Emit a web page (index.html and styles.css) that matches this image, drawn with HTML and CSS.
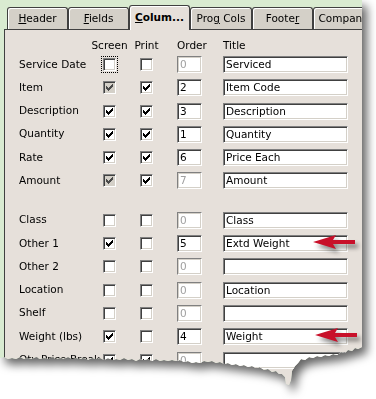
FILE: index.html
```html
<!DOCTYPE html>
<html lang="en">
<head>
  <meta charset="UTF-8" />
  <meta name="viewport" content="width=device-width, initial-scale=1.0"/>
  <title>Columns</title>
  <link rel="stylesheet" href="styles.css">
</head>
<body>
  <div class="shot">
    <div class="drop">
      <div class="window">
        <div class="tabs">
          <div class="tab"><u>H</u>eader</div>
          <div class="tab"><u>F</u>ields</div>
          <div class="tab active"><u>C</u>olum...</div>
          <div class="tab wide">Pro<u>g</u> Cols</div>
          <div class="tab">Foote<u>r</u></div>
          <div class="tab">Company</div>
        </div>

        <div class="panel">
          <div class="row head">
            <span></span>
            <span class="ctr">Screen</span>
            <span class="ctr">Print</span>
            <span>Order</span>
            <span>Title</span>
          </div>

          <div class="row">
            <span class="lbl">Service Date</span>
            <span class="cb focus"></span>
            <span class="cb"></span>
            <span class="edit num off">0</span>
            <span class="edit title">Serviced</span>
          </div>
          <div class="row">
            <span class="lbl">Item</span>
            <span class="cb dim"><svg viewBox="0 0 7 7"><path d="M0 2h1v3h-1z M1 3h1v3h-1z M2 4h1v3h-1z M3 3h1v3h-1z M4 2h1v3h-1z M5 1h1v3h-1z M6 0h1v3h-1z"/></svg></span>
            <span class="cb"><svg viewBox="0 0 7 7"><path d="M0 2h1v3h-1z M1 3h1v3h-1z M2 4h1v3h-1z M3 3h1v3h-1z M4 2h1v3h-1z M5 1h1v3h-1z M6 0h1v3h-1z"/></svg></span>
            <span class="edit num">2</span>
            <span class="edit title">Item Code</span>
          </div>
          <div class="row">
            <span class="lbl">Description</span>
            <span class="cb"><svg viewBox="0 0 7 7"><path d="M0 2h1v3h-1z M1 3h1v3h-1z M2 4h1v3h-1z M3 3h1v3h-1z M4 2h1v3h-1z M5 1h1v3h-1z M6 0h1v3h-1z"/></svg></span>
            <span class="cb"><svg viewBox="0 0 7 7"><path d="M0 2h1v3h-1z M1 3h1v3h-1z M2 4h1v3h-1z M3 3h1v3h-1z M4 2h1v3h-1z M5 1h1v3h-1z M6 0h1v3h-1z"/></svg></span>
            <span class="edit num">3</span>
            <span class="edit title">Description</span>
          </div>
          <div class="row">
            <span class="lbl">Quantity</span>
            <span class="cb"><svg viewBox="0 0 7 7"><path d="M0 2h1v3h-1z M1 3h1v3h-1z M2 4h1v3h-1z M3 3h1v3h-1z M4 2h1v3h-1z M5 1h1v3h-1z M6 0h1v3h-1z"/></svg></span>
            <span class="cb"><svg viewBox="0 0 7 7"><path d="M0 2h1v3h-1z M1 3h1v3h-1z M2 4h1v3h-1z M3 3h1v3h-1z M4 2h1v3h-1z M5 1h1v3h-1z M6 0h1v3h-1z"/></svg></span>
            <span class="edit num">1</span>
            <span class="edit title">Quantity</span>
          </div>
          <div class="row">
            <span class="lbl">Rate</span>
            <span class="cb"><svg viewBox="0 0 7 7"><path d="M0 2h1v3h-1z M1 3h1v3h-1z M2 4h1v3h-1z M3 3h1v3h-1z M4 2h1v3h-1z M5 1h1v3h-1z M6 0h1v3h-1z"/></svg></span>
            <span class="cb"><svg viewBox="0 0 7 7"><path d="M0 2h1v3h-1z M1 3h1v3h-1z M2 4h1v3h-1z M3 3h1v3h-1z M4 2h1v3h-1z M5 1h1v3h-1z M6 0h1v3h-1z"/></svg></span>
            <span class="edit num">6</span>
            <span class="edit title">Price Each</span>
          </div>
          <div class="row">
            <span class="lbl">Amount</span>
            <span class="cb dim"><svg viewBox="0 0 7 7"><path d="M0 2h1v3h-1z M1 3h1v3h-1z M2 4h1v3h-1z M3 3h1v3h-1z M4 2h1v3h-1z M5 1h1v3h-1z M6 0h1v3h-1z"/></svg></span>
            <span class="cb"><svg viewBox="0 0 7 7"><path d="M0 2h1v3h-1z M1 3h1v3h-1z M2 4h1v3h-1z M3 3h1v3h-1z M4 2h1v3h-1z M5 1h1v3h-1z M6 0h1v3h-1z"/></svg></span>
            <span class="edit num off">7</span>
            <span class="edit title">Amount</span>
          </div>

          <div class="gap"></div>

          <div class="row">
            <span class="lbl">Class</span>
            <span class="cb"></span>
            <span class="cb"></span>
            <span class="edit num off">0</span>
            <span class="edit title">Class</span>
          </div>
          <div class="row">
            <span class="lbl">Other 1</span>
            <span class="cb"><svg viewBox="0 0 7 7"><path d="M0 2h1v3h-1z M1 3h1v3h-1z M2 4h1v3h-1z M3 3h1v3h-1z M4 2h1v3h-1z M5 1h1v3h-1z M6 0h1v3h-1z"/></svg></span>
            <span class="cb"></span>
            <span class="edit num">5</span>
            <span class="edit title">Extd Weight</span>
          </div>
          <div class="row">
            <span class="lbl">Other 2</span>
            <span class="cb"></span>
            <span class="cb"></span>
            <span class="edit num off">0</span>
            <span class="edit title"></span>
          </div>
          <div class="row">
            <span class="lbl">Location</span>
            <span class="cb"></span>
            <span class="cb"></span>
            <span class="edit num off">0</span>
            <span class="edit title">Location</span>
          </div>
          <div class="row">
            <span class="lbl">Shelf</span>
            <span class="cb"></span>
            <span class="cb"></span>
            <span class="edit num off">0</span>
            <span class="edit title"></span>
          </div>
          <div class="row">
            <span class="lbl">Weight (lbs)</span>
            <span class="cb"><svg viewBox="0 0 7 7"><path d="M0 2h1v3h-1z M1 3h1v3h-1z M2 4h1v3h-1z M3 3h1v3h-1z M4 2h1v3h-1z M5 1h1v3h-1z M6 0h1v3h-1z"/></svg></span>
            <span class="cb"></span>
            <span class="edit num">4</span>
            <span class="edit title">Weight</span>
          </div>
          <div class="row">
            <span class="lbl">Qty Price Break</span>
            <span class="cb"><svg viewBox="0 0 7 7"><path d="M0 2h1v3h-1z M1 3h1v3h-1z M2 4h1v3h-1z M3 3h1v3h-1z M4 2h1v3h-1z M5 1h1v3h-1z M6 0h1v3h-1z"/></svg></span>
            <span class="cb"><svg viewBox="0 0 7 7"><path d="M0 2h1v3h-1z M1 3h1v3h-1z M2 4h1v3h-1z M3 3h1v3h-1z M4 2h1v3h-1z M5 1h1v3h-1z M6 0h1v3h-1z"/></svg></span>
            <span class="edit num off">0</span>
            <span class="edit title"></span>
          </div>
        </div>

        <!-- callout arrows -->
        <svg class="arrow a1" viewBox="0 0 42 14"><path d="M0 7 L23 0 L20 5 L42 5 L42 9 L20 9 L23 14 Z"/></svg>
        <svg class="arrow a2" viewBox="0 0 42 14"><path d="M0 7 L23 0 L20 5 L42 5 L42 9 L20 9 L23 14 Z"/></svg>
      </div>
    </div>
  </div>
</body>
</html>
```

FILE: styles.css
```css
body {
  margin: 0;
  background: #fff;
  font-family: "DejaVu Sans", sans-serif;
  font-size: 10.5px;
  color: #000;
}
.shot {
  position: relative;
  width: 376px;
  height: 399px;
  overflow: hidden;
}
.drop {
  width: 362px;
  filter: drop-shadow(5px 6px 5px rgba(0, 0, 0, 0.6));
}
.window {
  position: relative;
  display: flex;
  flex-direction: column;
  height: 390px;
  padding: 5px 0 0 4px;
  box-sizing: border-box;
  background: #d9ebd1;
  clip-path: polygon(0 0, 362px 0, 362px 347px, 358px 349px, 355px 348px, 352px 351px, 348px 350px, 345px 353px, 341px 352px, 337px 355px, 333px 354px, 329px 356px, 325px 355px, 321px 357px, 317px 356px, 313px 358px, 309px 357px, 305px 360px, 301px 359px, 298px 363px, 295px 366px, 292px 371px, 291px 380px, 289px 385px, 286px 384px, 285px 377px, 282px 374px, 279px 374px, 276px 371px, 272px 372px, 268px 369px, 264px 370px, 260px 367px, 256px 368px, 252px 366px, 248px 367px, 244px 365px, 240px 366px, 236px 364px, 232px 365px, 228px 363px, 224px 364px, 220px 362px, 216px 363px, 212px 361px, 208px 362px, 204px 361px, 200px 363px, 196px 362px, 192px 363px, 188px 361px, 184px 362px, 180px 360px, 176px 361px, 172px 360px, 168px 361px, 164px 360px, 160px 361px, 156px 359px, 152px 361px, 148px 359px, 144px 360px, 140px 359px, 136px 361px, 132px 359px, 128px 360px, 124px 358px, 120px 360px, 116px 359px, 112px 360px, 108px 358px, 104px 360px, 100px 358px, 96px 359px, 92px 358px, 88px 360px, 84px 358px, 80px 359px, 76px 358px, 72px 359px, 68px 357px, 64px 359px, 60px 358px, 56px 359px, 52px 357px, 48px 359px, 44px 358px, 40px 359px, 36px 357px, 32px 359px, 28px 358px, 24px 359px, 20px 357px, 16px 359px, 12px 358px, 8px 359px, 4px 357px, 0 358px);
}

/* tab strip */
.tabs {
  display: flex;
  align-items: flex-end;
  height: 24px;
  padding-left: 3px;
}
.tab {
  flex: none;
  width: 61px;
  height: 22px;
  box-sizing: border-box;
  border: 1px solid #404040;
  border-bottom: none;
  border-radius: 3px 3px 0 0;
  background: #d4d0c8;
  box-shadow: inset 1px 1px #fff;
  text-align: center;
  line-height: 20px;
  white-space: nowrap;
}
.tab.wide {
  width: 62px;
}
.tab.active {
  position: relative;
  z-index: 1;
  height: 25px;
  margin-bottom: -1px;
  background: #e6e0da;
  font-weight: bold;
  line-height: 22px;
}

/* columns panel */
.panel {
  flex: 1;
  border-top: 1px solid #404040;
  border-left: 1px solid #404040;
  background: #e6e0da;
  padding: 8px 0 0 14px;
}
.row {
  display: grid;
  grid-template-columns: 84px 37px 37px 46px 125px;
  align-items: center;
  height: 17px;
  margin-bottom: 6.3px;
  white-space: nowrap;
}
.row.head {
  height: 13px;
  margin-bottom: 5px;
}
.lbl {
  overflow: hidden;
  padding-bottom: 2px;
}
.ctr {
  width: 13px;
  display: flex;
  justify-content: center;
}
.gap {
  height: 16px;
}

.cb {
  width: 13px;
  height: 13px;
  box-sizing: border-box;
  border: 1px solid;
  border-color: #808080 #fff #fff #808080;
  box-shadow: inset 1px 1px #404040, inset -1px -1px #d4d0c8;
  background: #fff;
  display: flex;
  align-items: center;
  justify-content: center;
}
.cb svg {
  display: block;
  width: 7px;
  height: 7px;
  fill: #000;
  shape-rendering: crispEdges;
}
.cb.dim {
  background: #d4d0c8;
}
.cb.dim svg {
  fill: #4a4a4a;
}
.cb.focus {
  outline: 1px dotted #000;
  outline-offset: 1px;
}

.edit {
  height: 17px;
  box-sizing: border-box;
  border: 1px solid;
  border-color: #808080 #fff #fff #808080;
  box-shadow: inset 1px 1px #404040, inset -1px -1px #d4d0c8;
  background: #fff;
  padding: 0 2px;
  line-height: 15px;
  overflow: hidden;
}
.edit.num {
  width: 25px;
}
.edit.title {
  width: 125px;
}
.edit.off {
  color: #a0a0a0;
  box-shadow: inset 1px 1px #d4d0c8, inset -1px -1px #d4d0c8;
}

.arrow {
  position: absolute;
  width: 42px;
  height: 14px;
  fill: #c8102a;
  filter: drop-shadow(3px 4px 2px rgba(0, 0, 0, 0.45));
}
.arrow.a1 {
  left: 313px;
  top: 235px;
}
.arrow.a2 {
  left: 315px;
  top: 328px;
}
```
